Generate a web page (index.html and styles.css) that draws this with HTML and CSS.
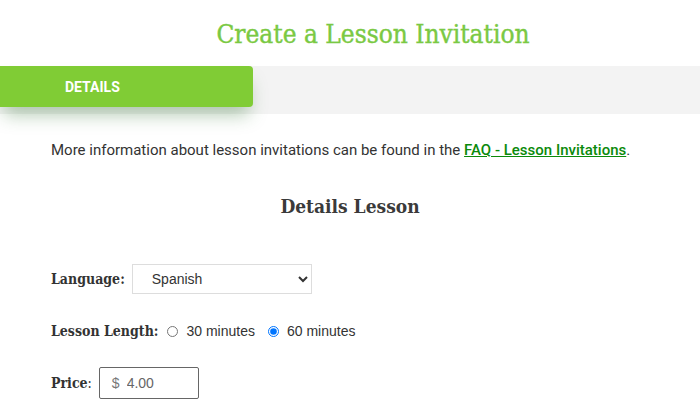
FILE: index.html
```html
<!DOCTYPE html>
<html lang="en">
<head>
  <meta charset="UTF-8">
  <title>Create a Lesson Invitation</title>
  <link rel="stylesheet" href="styles.css">
</head>
<body>
  <!-- Title -->
  <h1 class="page-title">Create a Lesson Invitation</h1>

  <!-- Tabs -->
  <div class="tab-bar">
    <div class="tab active">DETAILS</div>
  </div>

  <div class="content">
    <p class="intro">More information about lesson invitations can be found in the <a href="#">FAQ - Lesson Invitations</a>.</p>

    <h2 class="section-title">Details Lesson</h2>

    <form class="lesson-form">
      <div class="form-row">
        <label class="field-label" for="language">Language:</label>
        <select id="language" class="select">
          <option>Spanish</option>
        </select>
      </div>

      <div class="form-row">
        <span class="field-label">Lesson Length:</span>
        <label class="radio"><input type="radio" name="length"> 30 minutes</label>
        <label class="radio"><input type="radio" name="length" checked> 60 minutes</label>
      </div>

      <div class="form-row">
        <label class="field-label" for="price">Price<span class="thin">:</span></label>
        <div class="price-box">
          <span class="currency">$</span>
          <input id="price" type="text" value="4.00">
        </div>
      </div>
    </form>
  </div>
</body>
</html>
```
FILE: styles.css
```css
/* Page basics */
body {
  font-family: Roboto, Arial, sans-serif;
  background-color: #fff;
  color: #333;
  margin: 0;
  padding: 0;
}
.page-title {
  font-family: "DejaVu Serif Condensed", "DejaVu Serif", serif;
  font-weight: normal;
  font-size: 26px;
  color: #7ac943;
  text-align: center;
  margin: 0;
  padding: 19px 0 0 46px;
  height: 48px;
  -webkit-text-stroke: 0.4px #7ac943;
}
.tab-bar {
  background-color: #f3f3f3;
  height: 48px;
}
.tab {
  width: 253px;
  height: 41px;
  margin-top: -1px;
  background-color: #80cc35;
  color: #fff;
  font-size: 14px;
  font-weight: bold;
  line-height: 42px;
  padding-left: 65px;
  box-sizing: border-box;
  border-radius: 0 4px 4px 0;
  box-shadow: 0 12px 18px -4px rgba(40, 110, 40, 0.35);
  position: relative;
}
.content {
  padding: 0 51px;
}
.intro {
  font-size: 15px;
  margin: 27px 0 0;
}
.intro a {
  color: #0b8a0b;
  font-weight: 500;
}
.section-title {
  font-family: "DejaVu Serif Condensed", "DejaVu Serif", serif;
  font-size: 19px;
  font-weight: bold;
  color: #3a3a3a;
  text-align: center;
  margin: 36px 0 0;
}
.lesson-form {
  margin-top: 47px;
}
.form-row {
  display: flex;
  align-items: center;
  height: 30px;
  margin-bottom: 22px;
}
.field-label {
  font-family: "DejaVu Serif Condensed", "DejaVu Serif", serif;
  font-weight: bold;
  font-size: 14px;
  color: #333;
  margin-right: 7px;
}
.thin {
  font-weight: normal;
}
.select {
  width: 180px;
  height: 30px;
  border: 1px solid #ddd;
  background: #fff;
  font-family: "Liberation Sans", Arial, sans-serif;
  font-size: 14px;
  color: #333;
  padding-left: 15px;
  border-radius: 0;
}
.radio {
  font-family: "Liberation Sans", Arial, sans-serif;
  font-size: 14px;
  color: #333;
  margin-right: 11px;
  display: flex;
  align-items: center;
}
.radio input {
  width: 11px;
  height: 11px;
  margin: 0 8px 0 2px;
}
.price-box {
  display: flex;
  align-items: center;
  width: 100px;
  height: 32px;
  border: 1px solid #666;
  border-radius: 2px;
  box-sizing: border-box;
  padding-left: 12px;
}
.currency {
  font-family: "Liberation Sans", Arial, sans-serif;
  font-size: 14px;
  color: #777;
}
.price-box input {
  border: none;
  outline: none;
  width: 60px;
  font-family: "Liberation Sans", Arial, sans-serif;
  font-size: 14px;
  color: #666;
  padding: 0 0 0 7px;
}
```
